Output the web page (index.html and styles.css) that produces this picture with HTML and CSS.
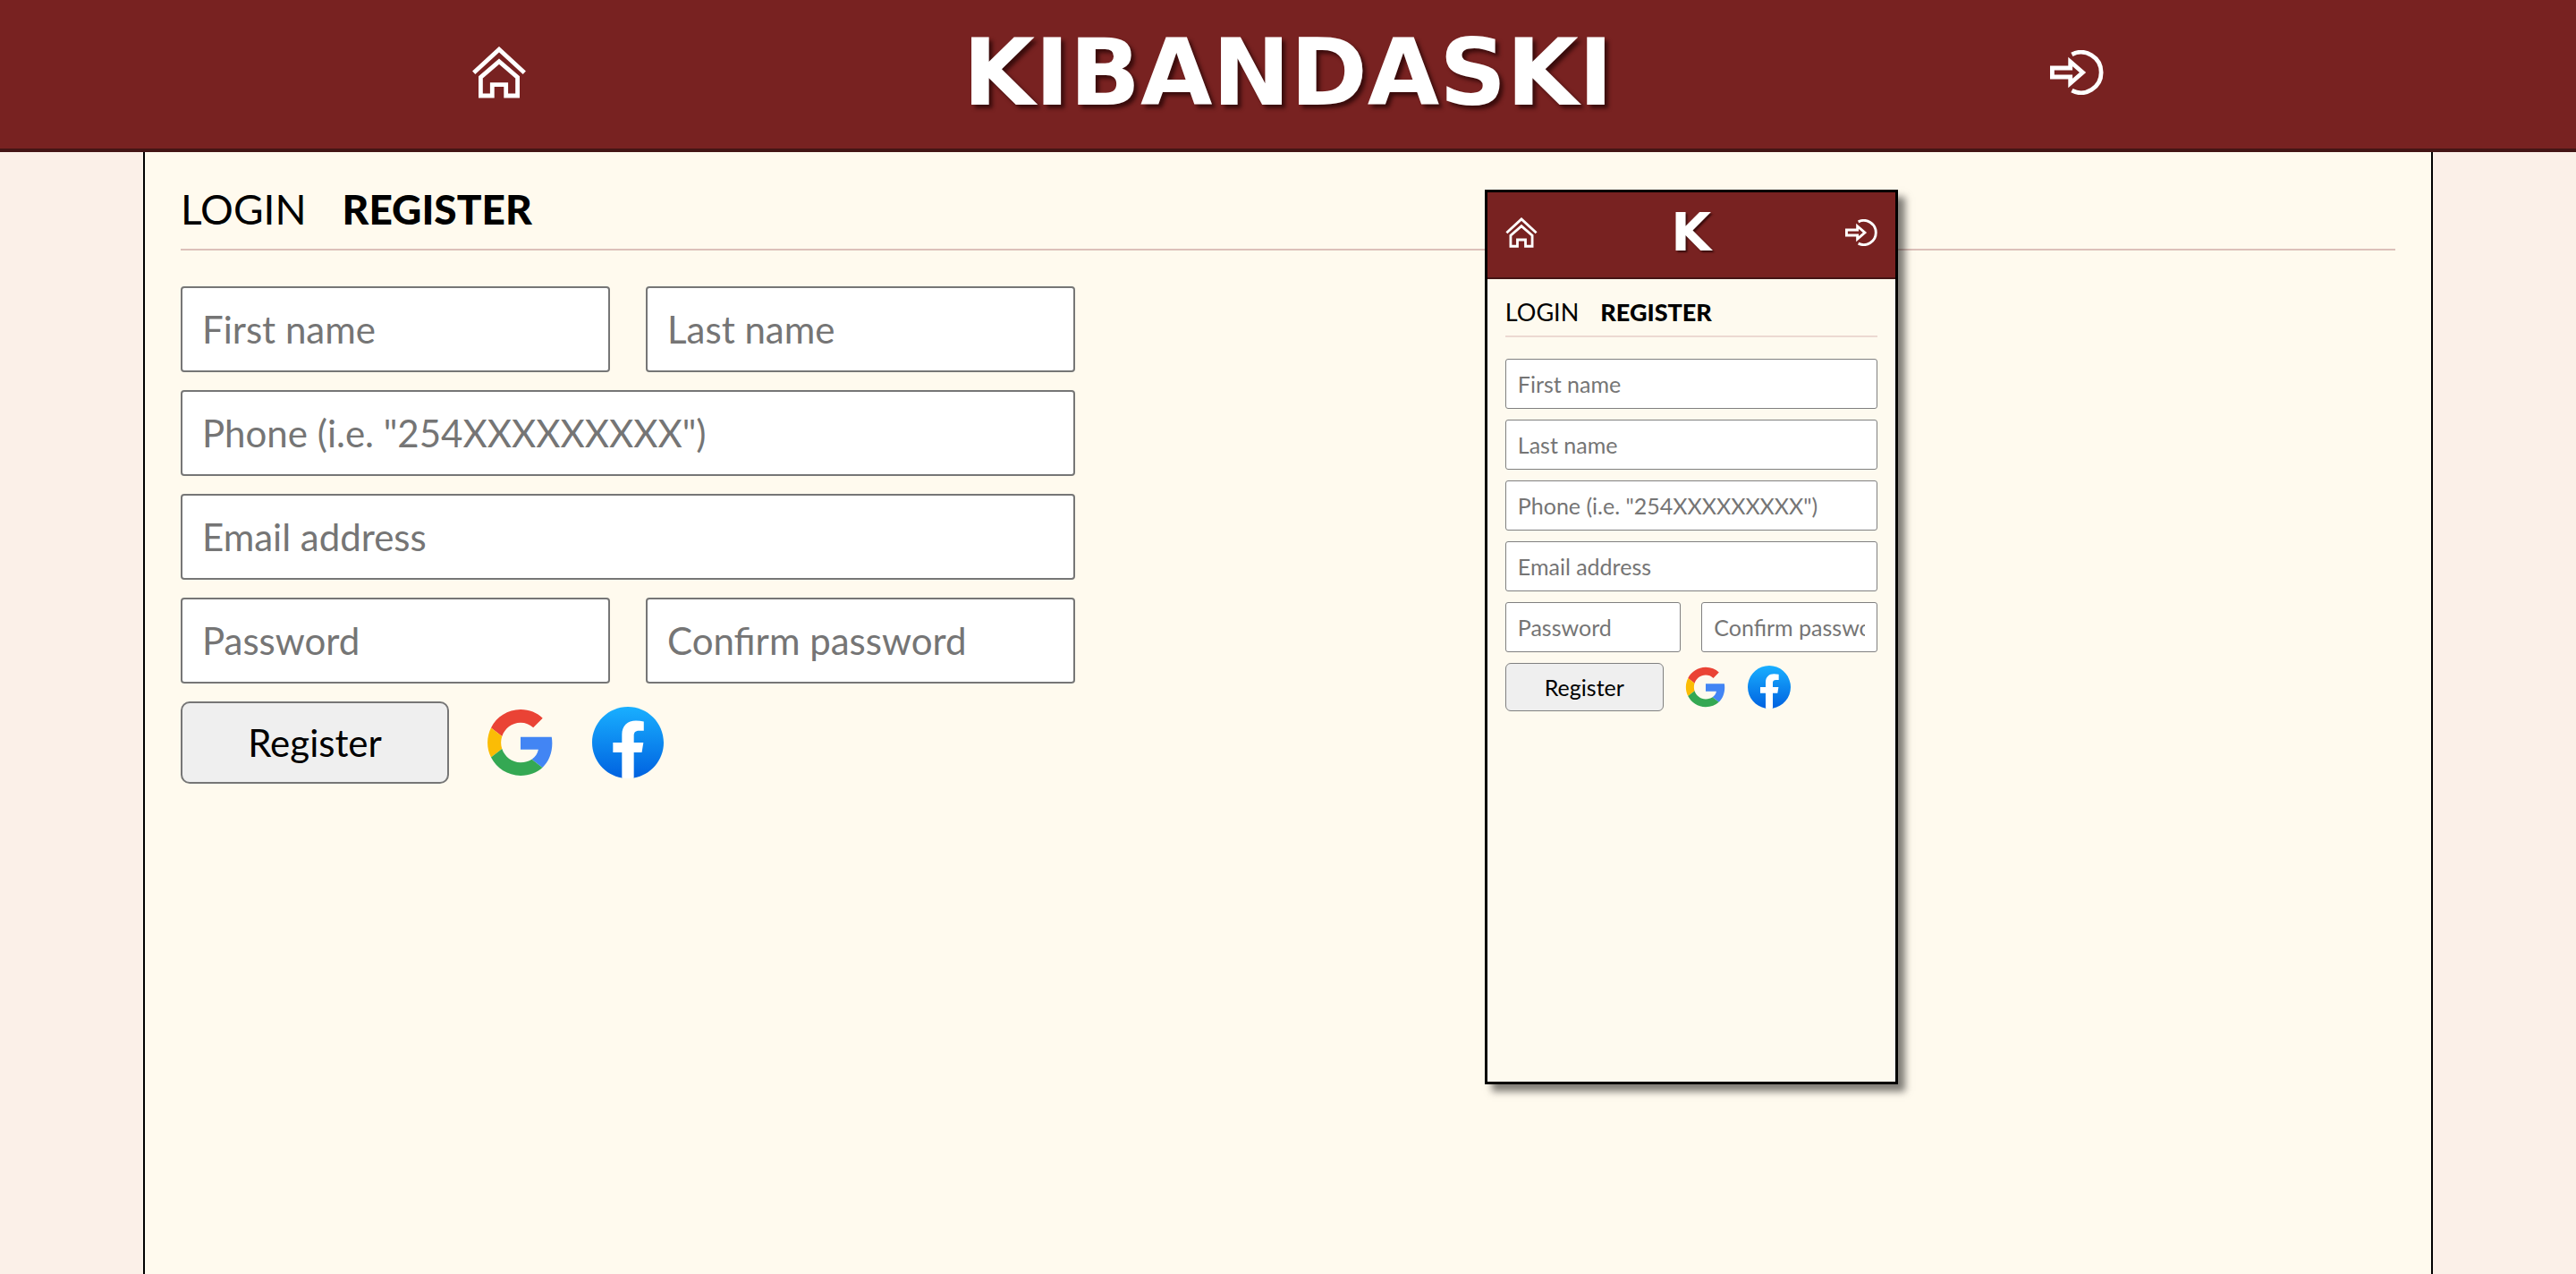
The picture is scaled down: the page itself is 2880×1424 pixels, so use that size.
FILE: index.html
```html
<!DOCTYPE html>
<html lang="en">
<head>
<meta charset="utf-8">
<meta name="viewport" content="width=device-width, initial-scale=1">
<title>Kibandaski - Register</title>
<link rel="stylesheet" href="styles.css">
</head>
<body>
<svg class="sprite" aria-hidden="true">
  <defs>
    <linearGradient id="fb-blue" x1="0" y1="1" x2="0" y2="0">
      <stop offset="0" stop-color="#0062e0"/>
      <stop offset="1" stop-color="#19afff"/>
    </linearGradient>
  </defs>
  <symbol id="home" viewBox="0 0 60 58">
    <g fill="none" stroke="#fff" stroke-width="4.8">
      <path d="M1.7 29.3 30 3.2l28.3 26.1"/>
      <path d="M9.4 55V34.4L30 16.6l20.6 17.8V55H37.7V42.7H22.3V55z"/>
    </g>
  </symbol>
  <symbol id="enter" viewBox="0 0 60 50">
    <g fill="none" stroke="#fff" stroke-width="4.8">
      <path d="M24.4 4.8A22.6 22.6 0 1 1 24.4 45.2"/>
      <path d="M2.4 20h20.3v-7l13.8 12-13.8 12v-7H2.4z"/>
    </g>
  </symbol>
  <symbol id="google" viewBox="-2 -2 52 52">
    <path fill="#ea4335" d="M24 9.5c3.54 0 6.71 1.22 9.21 3.6l6.85-6.85C35.9 2.38 30.47 0 24 0 14.62 0 6.51 5.38 2.56 13.22l7.98 6.19C12.43 13.72 17.74 9.5 24 9.5z"/>
    <path fill="#4285f4" d="M46.98 24.55c0-1.57-.15-3.09-.38-4.55H24v9.02h12.94c-.58 2.96-2.26 5.48-4.78 7.18l7.73 6c4.51-4.18 7.09-10.36 7.09-17.65z"/>
    <path fill="#fbbc05" d="M10.53 28.59c-.48-1.45-.76-2.99-.76-4.59s.27-3.14.76-4.59l-7.98-6.19C.92 16.46 0 20.12 0 24c0 3.88.92 7.54 2.56 10.78l7.97-6.19z"/>
    <path fill="#34a853" d="M24 48c6.48 0 11.93-2.13 15.89-5.81l-7.73-6c-2.15 1.45-4.92 2.3-8.16 2.3-6.26 0-11.57-4.22-13.47-9.91l-7.98 6.19C6.51 42.62 14.62 48 24 48z"/>
  </symbol>
  <symbol id="facebook" viewBox="0 0 36 36">
    <path fill="url(#fb-blue)" d="M15 35.8C6.5 34.3 0 26.9 0 18 0 8.1 8.1 0 18 0s18 8.1 18 18c0 8.9-6.5 16.3-15 17.8l-1-.8h-4l-1 .8z"/>
    <path fill="#fff" d="M25 23l.8-5H21v-3.5c0-1.4.5-2.5 2.7-2.5H26V7.4c-1.3-.2-2.7-.4-4-.4-4.1 0-7 2.5-7 7v4h-4.5v5H15v12.7c1 .2 2 .3 3 .3s2-.1 3-.3V23h4z"/>
  </symbol>
</svg>

<header class="topbar">
  <a class="topbar-link" href="#" aria-label="Home"><svg class="icon-home"><use href="#home"/></svg></a>
  <h1 class="logo">KIBANDASKI</h1>
  <a class="topbar-link" href="#" aria-label="Login"><svg class="icon-enter"><use href="#enter"/></svg></a>
</header>

<main class="page">
  <nav class="tabs">
    <a class="tab" href="#">LOGIN</a>
    <a class="tab tab-active" href="#">REGISTER</a>
  </nav>
  <form class="form">
    <div class="row">
      <input class="field" type="text" placeholder="First name" aria-label="First name">
      <input class="field" type="text" placeholder="Last name" aria-label="Last name">
    </div>
    <input class="field" type="tel" placeholder='Phone (i.e. "254XXXXXXXXX")' aria-label="Phone">
    <input class="field" type="email" placeholder="Email address" aria-label="Email address">
    <div class="row">
      <input class="field" type="password" placeholder="Password" aria-label="Password">
      <input class="field" type="password" placeholder="Confirm password" aria-label="Confirm password">
    </div>
    <div class="actions">
      <button class="submit" type="button">Register</button>
      <a class="social" href="#" aria-label="Google"><svg class="social-icon"><use href="#google"/></svg></a>
      <a class="social" href="#" aria-label="Facebook"><svg class="social-icon"><use href="#facebook"/></svg></a>
    </div>
  </form>

  <section class="phone" aria-label="Mobile view">
    <header class="topbar">
      <a class="topbar-link" href="#" aria-label="Home"><svg class="icon-home"><use href="#home"/></svg></a>
      <h2 class="logo">K</h2>
      <a class="topbar-link" href="#" aria-label="Login"><svg class="icon-enter"><use href="#enter"/></svg></a>
    </header>
    <div class="phone-body">
      <nav class="tabs">
        <a class="tab" href="#">LOGIN</a>
        <a class="tab tab-active" href="#">REGISTER</a>
      </nav>
      <form class="form">
        <input class="field" type="text" placeholder="First name" aria-label="First name">
        <input class="field" type="text" placeholder="Last name" aria-label="Last name">
        <input class="field" type="tel" placeholder='Phone (i.e. "254XXXXXXXXX")' aria-label="Phone">
        <input class="field" type="email" placeholder="Email address" aria-label="Email address">
        <div class="row">
          <input class="field" type="password" placeholder="Password" aria-label="Password">
          <input class="field" type="password" placeholder="Confirm password" aria-label="Confirm password">
        </div>
        <div class="actions">
          <button class="submit" type="button">Register</button>
          <a class="social" href="#" aria-label="Google"><svg class="social-icon"><use href="#google"/></svg></a>
          <a class="social" href="#" aria-label="Facebook"><svg class="social-icon"><use href="#facebook"/></svg></a>
        </div>
      </form>
    </div>
  </section>
</main>
</body>
</html>
```
FILE: styles.css
```css
* {
  box-sizing: border-box;
}

body {
  margin: 0;
  min-height: 100vh;
  display: flex;
  flex-direction: column;
  background: #fbf0e8;
  color: #000;
  font-family: Lato, "Noto Sans", sans-serif;
}

.sprite {
  position: absolute;
  width: 0;
  height: 0;
}

.topbar {
  display: flex;
  align-items: center;
  justify-content: space-between;
  padding: 22px 18.33% 26px;
  background: #782221;
  border-bottom: 4px solid #441515;
}

.topbar-link,
.social {
  display: flex;
}

.icon-home {
  width: 60px;
  height: 58px;
}

.icon-enter {
  width: 60px;
  height: 50px;
}

.logo {
  margin: 0;
  color: #fff;
  font: bold 104px/118px "DejaVu Sans", sans-serif;
  text-shadow: 4px 4px 4px #3a0c0c;
}

.page {
  position: relative;
  flex: 1;
  width: 100%;
  max-width: 2560px;
  margin: 0 auto;
  padding: 40px;
  background: #fffaee;
  border: solid #000;
  border-width: 0 2px;
}

.tabs {
  display: flex;
  gap: 40px;
  padding-bottom: 20px;
  border-bottom: 2px solid #dcc0b9;
  font-size: 46px;
  line-height: 48px;
}

.tab {
  color: #000;
  text-decoration: none;
}

.tab-active {
  font-weight: 900;
}

.form {
  display: flex;
  flex-direction: column;
  gap: 20px;
  max-width: 1000px;
  margin-top: 40px;
}

.row {
  display: grid;
  grid-template-columns: 1fr 1fr;
  gap: 40px;
}

.field {
  width: 100%;
  min-width: 0;
  height: 96px;
  padding: 0 22px;
  border: 2px solid #767676;
  border-radius: 4px;
  background: #fff;
  font: 42px Lato, "Noto Sans", sans-serif;
}

.field::placeholder {
  color: #757575;
}

.actions {
  display: flex;
  align-items: center;
  gap: 40px;
}

.submit {
  width: 300px;
  height: 92px;
  border: 2px solid #767676;
  border-radius: 10px;
  background: #efefef;
  color: #000;
  font: 42px Lato, "Noto Sans", sans-serif;
}

.social-icon {
  width: 80px;
  height: 80px;
}

/* Mobile view that floats over the desktop page */
.phone {
  position: absolute;
  top: 42px;
  left: 58.6%;
  width: 462px;
  height: 1000px;
  border: 3px solid #000;
  background: #fefaef;
  box-shadow: 8px 8px 8px rgba(0, 0, 0, .5);
}

.phone .topbar {
  padding: 9px 20px 14px;
  border-bottom-width: 2px;
}

.phone .icon-home {
  width: 36px;
  height: 34px;
}

.phone .icon-enter {
  width: 36px;
  height: 30px;
}

.phone .logo {
  font-size: 58px;
  line-height: 72px;
  text-shadow: 2px 2px 2px #3a0c0c;
}

.phone-body {
  padding: 20px;
}

.phone .tabs {
  gap: 24px;
  padding-bottom: 9px;
  border-color: #ecd9d2;
  font-size: 27px;
  line-height: 34px;
}

.phone .form {
  gap: 12px;
  margin-top: 24px;
}

.phone .row {
  gap: 23px;
}

.phone .field {
  height: 56px;
  padding: 0 13px;
  border: 1px solid #808080;
  border-radius: 3px;
  font-size: 25px;
}

.phone .actions {
  gap: 23px;
}

.phone .submit {
  width: 177px;
  height: 54px;
  border: 1px solid #808080;
  border-radius: 6px;
  font-size: 25px;
}

.phone .social-icon {
  width: 48px;
  height: 48px;
}
```
